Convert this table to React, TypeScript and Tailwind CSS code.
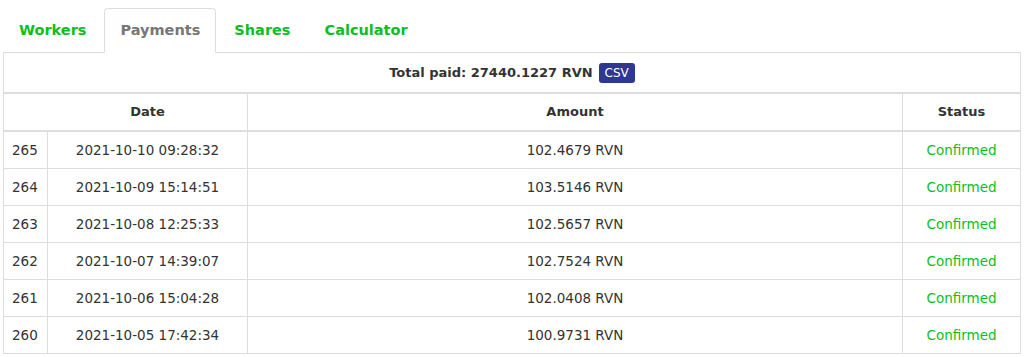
import React from "react";

const payments = [
  { id: 265, date: "2021-10-10 09:28:32", amount: "102.4679" },
  { id: 264, date: "2021-10-09 15:14:51", amount: "103.5146" },
  { id: 263, date: "2021-10-08 12:25:33", amount: "102.5657" },
  { id: 262, date: "2021-10-07 14:39:07", amount: "102.7524" },
  { id: 261, date: "2021-10-06 15:04:28", amount: "102.0408" },
  { id: 260, date: "2021-10-05 17:42:34", amount: "100.9731" },
];

const tabs = ["Workers", "Payments", "Shares", "Calculator"];

const App = () => {
  return (
    <div
      className="min-h-screen bg-white text-[#333]"
      style={{ fontFamily: '"DejaVu Sans", Verdana, sans-serif' }}
    >
      <div className="ml-[3px] w-[1018px] pt-2">
        {/* tabs */}
        <ul className="flex border-b border-[#ddd]">
          {tabs.map((t) => {
            const active = t === "Payments";
            return (
              <li key={t} className="-mb-px mr-[2px]">
                <div
                  className={
                    active
                      ? "rounded-t-[4px] border border-[#ddd] border-b-transparent bg-white px-[15px] py-[10px] text-[14.5px] leading-[23px] font-bold text-[#777]"
                      : "rounded-t-[4px] border border-transparent px-[15px] py-[10px] text-[14.5px] leading-[23px] font-bold text-[#0bbf1f]"
                  }
                >
                  {t}
                </div>
              </li>
            );
          })}
        </ul>

        {/* table */}
        <div className="border-l border-[#ddd]">
          <div className="flex h-[41px] items-center justify-center gap-[6px] border-r border-b-2 border-[#ddd] text-[13px] font-bold">
            <span>Total paid: 27440.1227 RVN</span>
            <span className="rounded-[3px] bg-[#30378f] px-[6px] text-[12px] leading-[20px] font-normal text-white">
              CSV
            </span>
          </div>

          <div className="grid grid-cols-[44px_200px_655px_118px] text-[13.5px] leading-[20px]">
            <div className="border-b-2 border-[#ddd]" />
            <div className="border-r border-b-2 border-[#ddd] py-2 text-center text-[13px] font-bold">
              Date
            </div>
            <div className="border-r border-b-2 border-[#ddd] py-2 text-center text-[13px] font-bold">
              Amount
            </div>
            <div className="border-r border-b-2 border-[#ddd] py-2 text-center text-[13px] font-bold">
              Status
            </div>

            {payments.map((p) => (
              <React.Fragment key={p.id}>
                <div className="border-r border-b border-[#ddd] px-2 py-2">
                  {p.id}
                </div>
                <div className="border-r border-b border-[#ddd] py-2 text-center">
                  {p.date}
                </div>
                <div className="border-r border-b border-[#ddd] py-2 text-center">
                  {p.amount} RVN
                </div>
                <div className="border-r border-b border-[#ddd] py-2 text-center text-[#0bbf1f]">
                  Confirmed
                </div>
              </React.Fragment>
            ))}
          </div>
        </div>
      </div>
    </div>
  );
};

export default App;
